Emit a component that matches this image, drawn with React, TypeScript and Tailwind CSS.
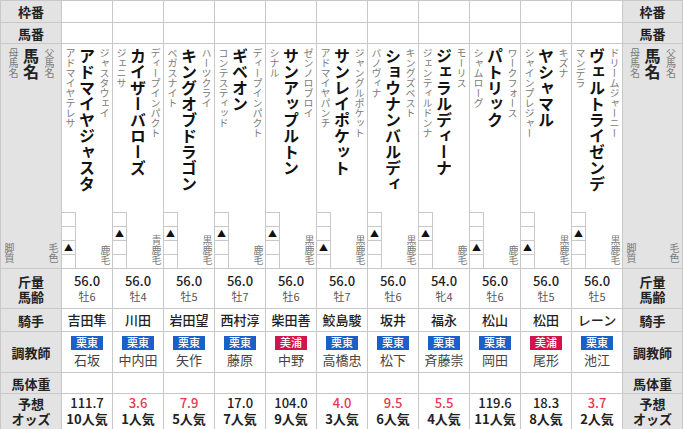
import React from "react";

type Horse = {
  name: string;
  sire: string;
  dam: string;
  coat: string;
  style: number; // which of the 4 boxes holds the ▲
  weight: string;
  sexAge: string;
  jockey: string;
  stable: "栗東" | "美浦";
  trainer: string;
  odds: string;
  pop: string;
};

const horses: Horse[] = [
  { name: "アドマイヤジャスタ", sire: "ジャスタウェイ", dam: "アドマイヤテレサ", coat: "鹿毛", style: 2, weight: "56.0", sexAge: "牡6", jockey: "吉田隼", stable: "栗東", trainer: "石坂", odds: "111.7", pop: "10人気" },
  { name: "カイザーバローズ", sire: "ディープインパクト", dam: "ジェニサ", coat: "青鹿毛", style: 1, weight: "56.0", sexAge: "牡4", jockey: "川田", stable: "栗東", trainer: "中内田", odds: "3.6", pop: "1人気" },
  { name: "キングオブドラゴン", sire: "ハーツクライ", dam: "ベガスナイト", coat: "黒鹿毛", style: 1, weight: "56.0", sexAge: "牡5", jockey: "岩田望", stable: "栗東", trainer: "矢作", odds: "7.9", pop: "5人気" },
  { name: "ギベオン", sire: "ディープインパクト", dam: "コンテスティッド", coat: "鹿毛", style: 1, weight: "56.0", sexAge: "牡7", jockey: "西村淳", stable: "栗東", trainer: "藤原", odds: "17.0", pop: "7人気" },
  { name: "サンアップルトン", sire: "ゼンノロブロイ", dam: "シナル", coat: "黒鹿毛", style: 1, weight: "56.0", sexAge: "牡6", jockey: "柴田善", stable: "美浦", trainer: "中野", odds: "104.0", pop: "9人気" },
  { name: "サンレイポケット", sire: "ジャングルポケット", dam: "アドマイヤパンチ", coat: "黒鹿毛", style: 2, weight: "56.0", sexAge: "牡7", jockey: "鮫島駿", stable: "栗東", trainer: "高橋忠", odds: "4.0", pop: "3人気" },
  { name: "ショウナンバルディ", sire: "キングズベスト", dam: "バノヴィナ", coat: "黒鹿毛", style: 1, weight: "56.0", sexAge: "牡6", jockey: "坂井", stable: "栗東", trainer: "松下", odds: "9.5", pop: "6人気" },
  { name: "ジェラルディーナ", sire: "モーリス", dam: "ジェンティルドンナ", coat: "鹿毛", style: 1, weight: "54.0", sexAge: "牝4", jockey: "福永", stable: "栗東", trainer: "斉藤崇", odds: "5.5", pop: "4人気" },
  { name: "パトリック", sire: "ワークフォース", dam: "シャムローグ", coat: "鹿毛", style: 2, weight: "56.0", sexAge: "牡6", jockey: "松山", stable: "栗東", trainer: "岡田", odds: "119.6", pop: "11人気" },
  { name: "ヤシャマル", sire: "キズナ", dam: "シャインプレジャー", coat: "黒鹿毛", style: 2, weight: "56.0", sexAge: "牡5", jockey: "松田", stable: "美浦", trainer: "尾形", odds: "18.3", pop: "8人気" },
  { name: "ヴェルトライゼンデ", sire: "ドリームジャーニー", dam: "マンデラ", coat: "黒鹿毛", style: 1, weight: "56.0", sexAge: "牡5", jockey: "レーン", stable: "栗東", trainer: "池江", odds: "3.7", pop: "2人気" },
];

function V({ children, className = "" }: { children: React.ReactNode; className?: string }) {
  return <div className={`[writing-mode:vertical-rl] leading-none ${className}`}>{children}</div>;
}

function Head({ children, className = "" }: { children: React.ReactNode; className?: string }) {
  return (
    <div className={`bg-[#e3e3e3] flex items-center justify-center text-center text-[13px] font-bold text-[#222] leading-[15px] ${className}`}>
      {children}
    </div>
  );
}

function NameHead() {
  return (
    <div className="bg-[#e3e3e3] flex flex-col">
      <div className="flex-1 flex justify-center gap-[5px] pt-1">
        <V className="text-[10px] text-[#7a7a7a]">母馬名</V>
        <V className="text-[16px] font-bold text-[#222]">馬名</V>
        <V className="text-[10px] text-[#7a7a7a]">父馬名</V>
      </div>
      <div className="flex justify-between px-[3px] pb-[5px]">
        <V className="text-[10px] text-[#7a7a7a]">脚質</V>
        <V className="text-[10px] text-[#7a7a7a]">毛色</V>
      </div>
    </div>
  );
}

function NameCell({ h }: { h: Horse }) {
  return (
    <div className="bg-white flex flex-col">
      <div className="flex-1 flex justify-center gap-[4px] pt-1">
        <V className="text-[10px] text-[#7a7a7a]">{h.dam}</V>
        <V className="text-[16px] font-bold text-[#111]">{h.name}</V>
        <V className="text-[10px] text-[#7a7a7a]">{h.sire}</V>
      </div>
      <div className="flex items-end justify-between">
        <div className="flex flex-col w-[14px]">
          {[0, 1, 2, 3].map((i) => (
            <div key={i} className="h-[14px] border-t border-r border-[#c8c8c8] flex items-center justify-center text-[9px] leading-none text-[#111]">
              {i === h.style ? "▲" : ""}
            </div>
          ))}
        </div>
        <V className="text-[10px] text-[#7a7a7a] pr-[2px] pb-[3px]">{h.coat}</V>
      </div>
    </div>
  );
}

export default function App() {
  return (
    <div className="w-[683px] h-[429px] overflow-hidden bg-white font-['Noto_Sans_CJK_JP',sans-serif]">
      <div className="grid grid-cols-[60px_repeat(11,50px)_59px] grid-rows-[21px_20px_224px_39px_22px_40px_20px_44px] gap-px bg-[#c8c8c8] p-px w-[683px]">
        {/* 枠番 */}
        <Head>枠番</Head>
        {horses.map((h) => <div key={h.name + "w"} className="bg-white" />)}
        <Head>枠番</Head>

        {/* 馬番 */}
        <Head>馬番</Head>
        {horses.map((h) => <div key={h.name + "u"} className="bg-white" />)}
        <Head>馬番</Head>

        {/* 馬名 */}
        <NameHead />
        {horses.map((h) => <NameCell key={h.name} h={h} />)}
        <NameHead />

        {/* 斤量・馬齢 */}
        <Head>斤量<br />馬齢</Head>
        {horses.map((h) => (
          <div key={h.name + "k"} className="bg-white flex flex-col items-center justify-center pb-[2px]">
            <span className="text-[13px] leading-[16px] font-medium text-[#222]">{h.weight}</span>
            <span className="text-[11px] leading-[14px] text-[#555]">{h.sexAge}</span>
          </div>
        ))}
        <Head>斤量<br />馬齢</Head>

        {/* 騎手 */}
        <Head>騎手</Head>
        {horses.map((h) => (
          <div key={h.name + "j"} className="bg-white flex items-center justify-center text-[13px] font-medium text-[#222]">
            {h.jockey}
          </div>
        ))}
        <Head>騎手</Head>

        {/* 調教師 */}
        <Head>調教師</Head>
        {horses.map((h) => (
          <div key={h.name + "t"} className="bg-white flex flex-col items-center justify-center gap-[1px] pb-[1px]">
            <span
              className={`w-[32px] h-[14px] flex items-center justify-center text-[11px] leading-none font-medium text-white ${
                h.stable === "栗東" ? "bg-[#1b5fc9]" : "bg-[#d3134c]"
              }`}
            >
              {h.stable}
            </span>
            <span className="text-[13px] leading-[17px] text-[#444]">{h.trainer}</span>
          </div>
        ))}
        <Head>調教師</Head>

        {/* 馬体重 */}
        <Head>馬体重</Head>
        {horses.map((h) => <div key={h.name + "b"} className="bg-white" />)}
        <Head>馬体重</Head>

        {/* 予想オッズ */}
        <Head className="items-start pt-[2px]">予想<br />オッズ</Head>
        {horses.map((h) => {
          const hot = parseFloat(h.odds) < 10;
          return (
            <div key={h.name + "o"} className="bg-white flex flex-col items-center pt-[1px]">
              <span className={`text-[13px] leading-[16px] font-medium ${hot ? "text-[#e8384c]" : "text-[#222]"}`}>{h.odds}</span>
              <span className="text-[13px] leading-[16px] font-bold text-[#222]">{h.pop}</span>
            </div>
          );
        })}
        <Head className="items-start pt-[2px]">予想<br />オッズ</Head>
      </div>
    </div>
  );
}
